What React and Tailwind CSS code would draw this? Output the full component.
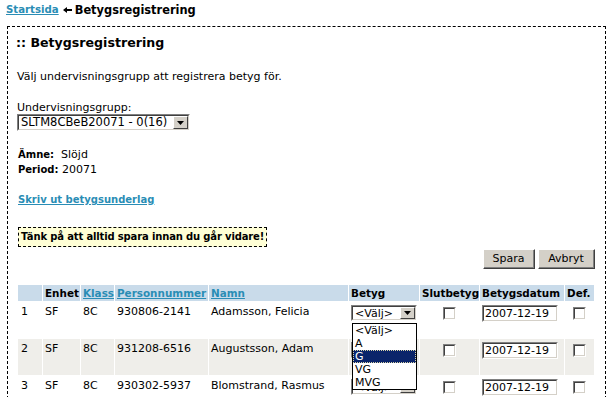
import React from "react";

const students = [
  { nr: 1, enhet: "SF", klass: "8C", pnr: "930806-2141", namn: "Adamsson, Felicia", open: true },
  { nr: 2, enhet: "SF", klass: "8C", pnr: "931208-6516", namn: "Augustsson, Adam", covered: true },
  { nr: 3, enhet: "SF", klass: "8C", pnr: "930302-5937", namn: "Blomstrand, Rasmus" },
];

function ArrowBox() {
  return (
    <span className="flex h-full w-[15px] items-center justify-center border border-t-white border-l-white border-b-[#404040] border-r-[#404040] bg-[#d4d0c8]">
      <svg width="7" height="4" viewBox="0 0 7 4">
        <path d="M0 0h7L3.5 4z" fill="#000" />
      </svg>
    </span>
  );
}

function FakeSelect({ text, className }) {
  return (
    <div className={`flex border border-t-[#808080] border-l-[#808080] border-b-white border-r-white ${className}`}>
      <div className="flex flex-1 items-stretch border border-t-[#404040] border-l-[#404040] border-b-[#d4d0c8] border-r-[#d4d0c8] bg-white">
        <span className="flex-1 overflow-hidden whitespace-nowrap pl-[2px] leading-[13px]">{text}</span>
        <ArrowBox />
      </div>
    </div>
  );
}

function Checkbox() {
  return (
    <span className="inline-block h-[13px] w-[13px] border border-t-[#808080] border-l-[#808080] border-b-white border-r-white align-top">
      <span className="block h-full w-full border border-t-[#404040] border-l-[#404040] border-b-[#d4d0c8] border-r-[#d4d0c8] bg-white" />
    </span>
  );
}

function DateInput({ value }) {
  return (
    <div className="h-[17px] w-[76px] border border-t-[#808080] border-l-[#808080] border-b-white border-r-white">
      <div className="h-full border border-t-[#404040] border-l-[#404040] border-b-[#d4d0c8] border-r-[#d4d0c8] bg-white pl-[1px] leading-[13px]">
        {value}
      </div>
    </div>
  );
}

function ClassicButton({ children, className }) {
  return (
    <button className={`h-[20px] border border-t-white border-l-white border-b-[#404040] border-r-[#404040] bg-[#d4d0c8] ${className}`}>
      <span className="flex h-full items-center justify-center border-b border-r border-b-[#808080] border-r-[#808080] leading-[13px]">
        {children}
      </span>
    </button>
  );
}

export default function App() {
  const link = "font-bold text-[#2a8db5] underline";
  return (
    <div className="min-h-screen bg-white font-['DejaVu_Sans',sans-serif] text-[11px] text-black">
      <div className="flex items-center pl-[6px] pt-[3px] leading-[14px]">
        <a className={`${link} text-[10.2px]`}>Startsida</a>
        <svg className="ml-[4px] mr-[3px]" width="9" height="6" viewBox="0 0 9 6">
          <path d="M0 3L4 0V2H9V4H4V6Z" fill="#000" />
        </svg>
        <span className="font-bold text-[11.4px]">Betygsregistrering</span>
      </div>

      <div className="ml-[7px] mt-[9px] w-[599px] border border-dashed border-black pb-[40px] pl-[9px] pr-[10px] pt-[8px]">
        <h1 className="-ml-[1px] text-[12.6px] font-bold leading-[16px]">:: Betygsregistrering</h1>
        <p className="mt-[19px] leading-[13px]">Välj undervisningsgrupp att registrera betyg för.</p>
        <p className="mt-[18px] leading-[13px]">Undervisningsgrupp:</p>
        <FakeSelect text="SLTM8CBeB20071 - 0(16)" className="h-[17px] w-[173px] text-[11.5px]" />

        <div className="mt-[16px] pl-[1px] leading-[15px]">
          <p><span className="text-[10px] font-bold">Ämne:</span>&nbsp; Slöjd</p>
          <p><span className="text-[10px] font-bold">Period:</span> 20071</p>
        </div>

        <p className="mt-[15px] pl-[1px] leading-[15px]">
          <a className={`${link} text-[10px]`}>Skriv ut betygsunderlag</a>
        </p>

        <div className="mt-[20px] pl-[1px]">
          <span className="inline-block h-[20px] border border-dashed border-black bg-[#ffffd6] px-[2px] text-[10px] font-bold leading-[18px] tracking-[-0.15px]">
            Tänk på att alltid spara innan du går vidare!
          </span>
        </div>

        <div className="mt-[2px] flex justify-end gap-[3px]">
          <ClassicButton className="w-[52px]">Spara</ClassicButton>
          <ClassicButton className="w-[57px]">Avbryt</ClassicButton>
        </div>

        <table className="mt-[15px] w-[578px] table-fixed border-separate border-spacing-px">
          <thead>
            <tr className="bg-[#c9dbea] text-left text-[10.4px] leading-[16px]">
              <th className="h-[16px] w-[24px] px-[2px]"></th>
              <th className="w-[37px] px-[2px]">Enhet</th>
              <th className="w-[33px] px-[2px]"><a className={link}>Klass</a></th>
              <th className="w-[93px] px-[2px]"><a className={link}>Personnummer</a></th>
              <th className="w-[139px] px-[2px]"><a className={link}>Namn</a></th>
              <th className="w-[70px] px-[2px]">Betyg</th>
              <th className="w-[59px] px-[2px]">Slutbetyg</th>
              <th className="w-[84px] px-[2px]">Betygsdatum</th>
              <th className="w-[29px] px-[2px]">Def.</th>
            </tr>
          </thead>
          <tbody>
            {students.map((s, i) => (
              <tr key={s.nr} className={`h-[36px] align-top leading-[13px] ${i % 2 === 1 ? "bg-[#efeeea]" : "bg-white"}`}>
                <td className="px-[3px] pt-[3px]">{s.nr}</td>
                <td className="px-[2px] pt-[3px]">{s.enhet}</td>
                <td className="px-[2px] pt-[3px]">{s.klass}</td>
                <td className="px-[2px] pt-[3px]">{s.pnr}</td>
                <td className="px-[2px] pt-[3px]">{s.namn}</td>
                <td className="relative px-[2px] pt-[3px]">
                  <FakeSelect text={s.covered ? "" : "<Välj>"} className="h-[16px] w-[66px]" />
                  {s.open && (
                    <div className="absolute left-[3px] top-[21px] z-10 w-[65px] border border-black bg-white leading-[13px]">
                      <div className="h-[13px] pl-[2px]">&lt;Välj&gt;</div>
                      <div className="h-[13px] pl-[2px]">A</div>
                      <div className="h-[13px] bg-[#0a246a] pl-[2px] text-white outline-1 -outline-offset-1 outline-dotted outline-[#d8d3a8]">G</div>
                      <div className="h-[13px] pl-[2px]">VG</div>
                      <div className="h-[13px] pl-[2px]">MVG</div>
                    </div>
                  )}
                </td>
                <td className="pt-[5px] text-center"><Checkbox /></td>
                <td className="px-[2px] pt-[3px]"><DateInput value="2007-12-19" /></td>
                <td className="pt-[5px] text-center"><Checkbox /></td>
              </tr>
            ))}
          </tbody>
        </table>
      </div>
    </div>
  );
}
